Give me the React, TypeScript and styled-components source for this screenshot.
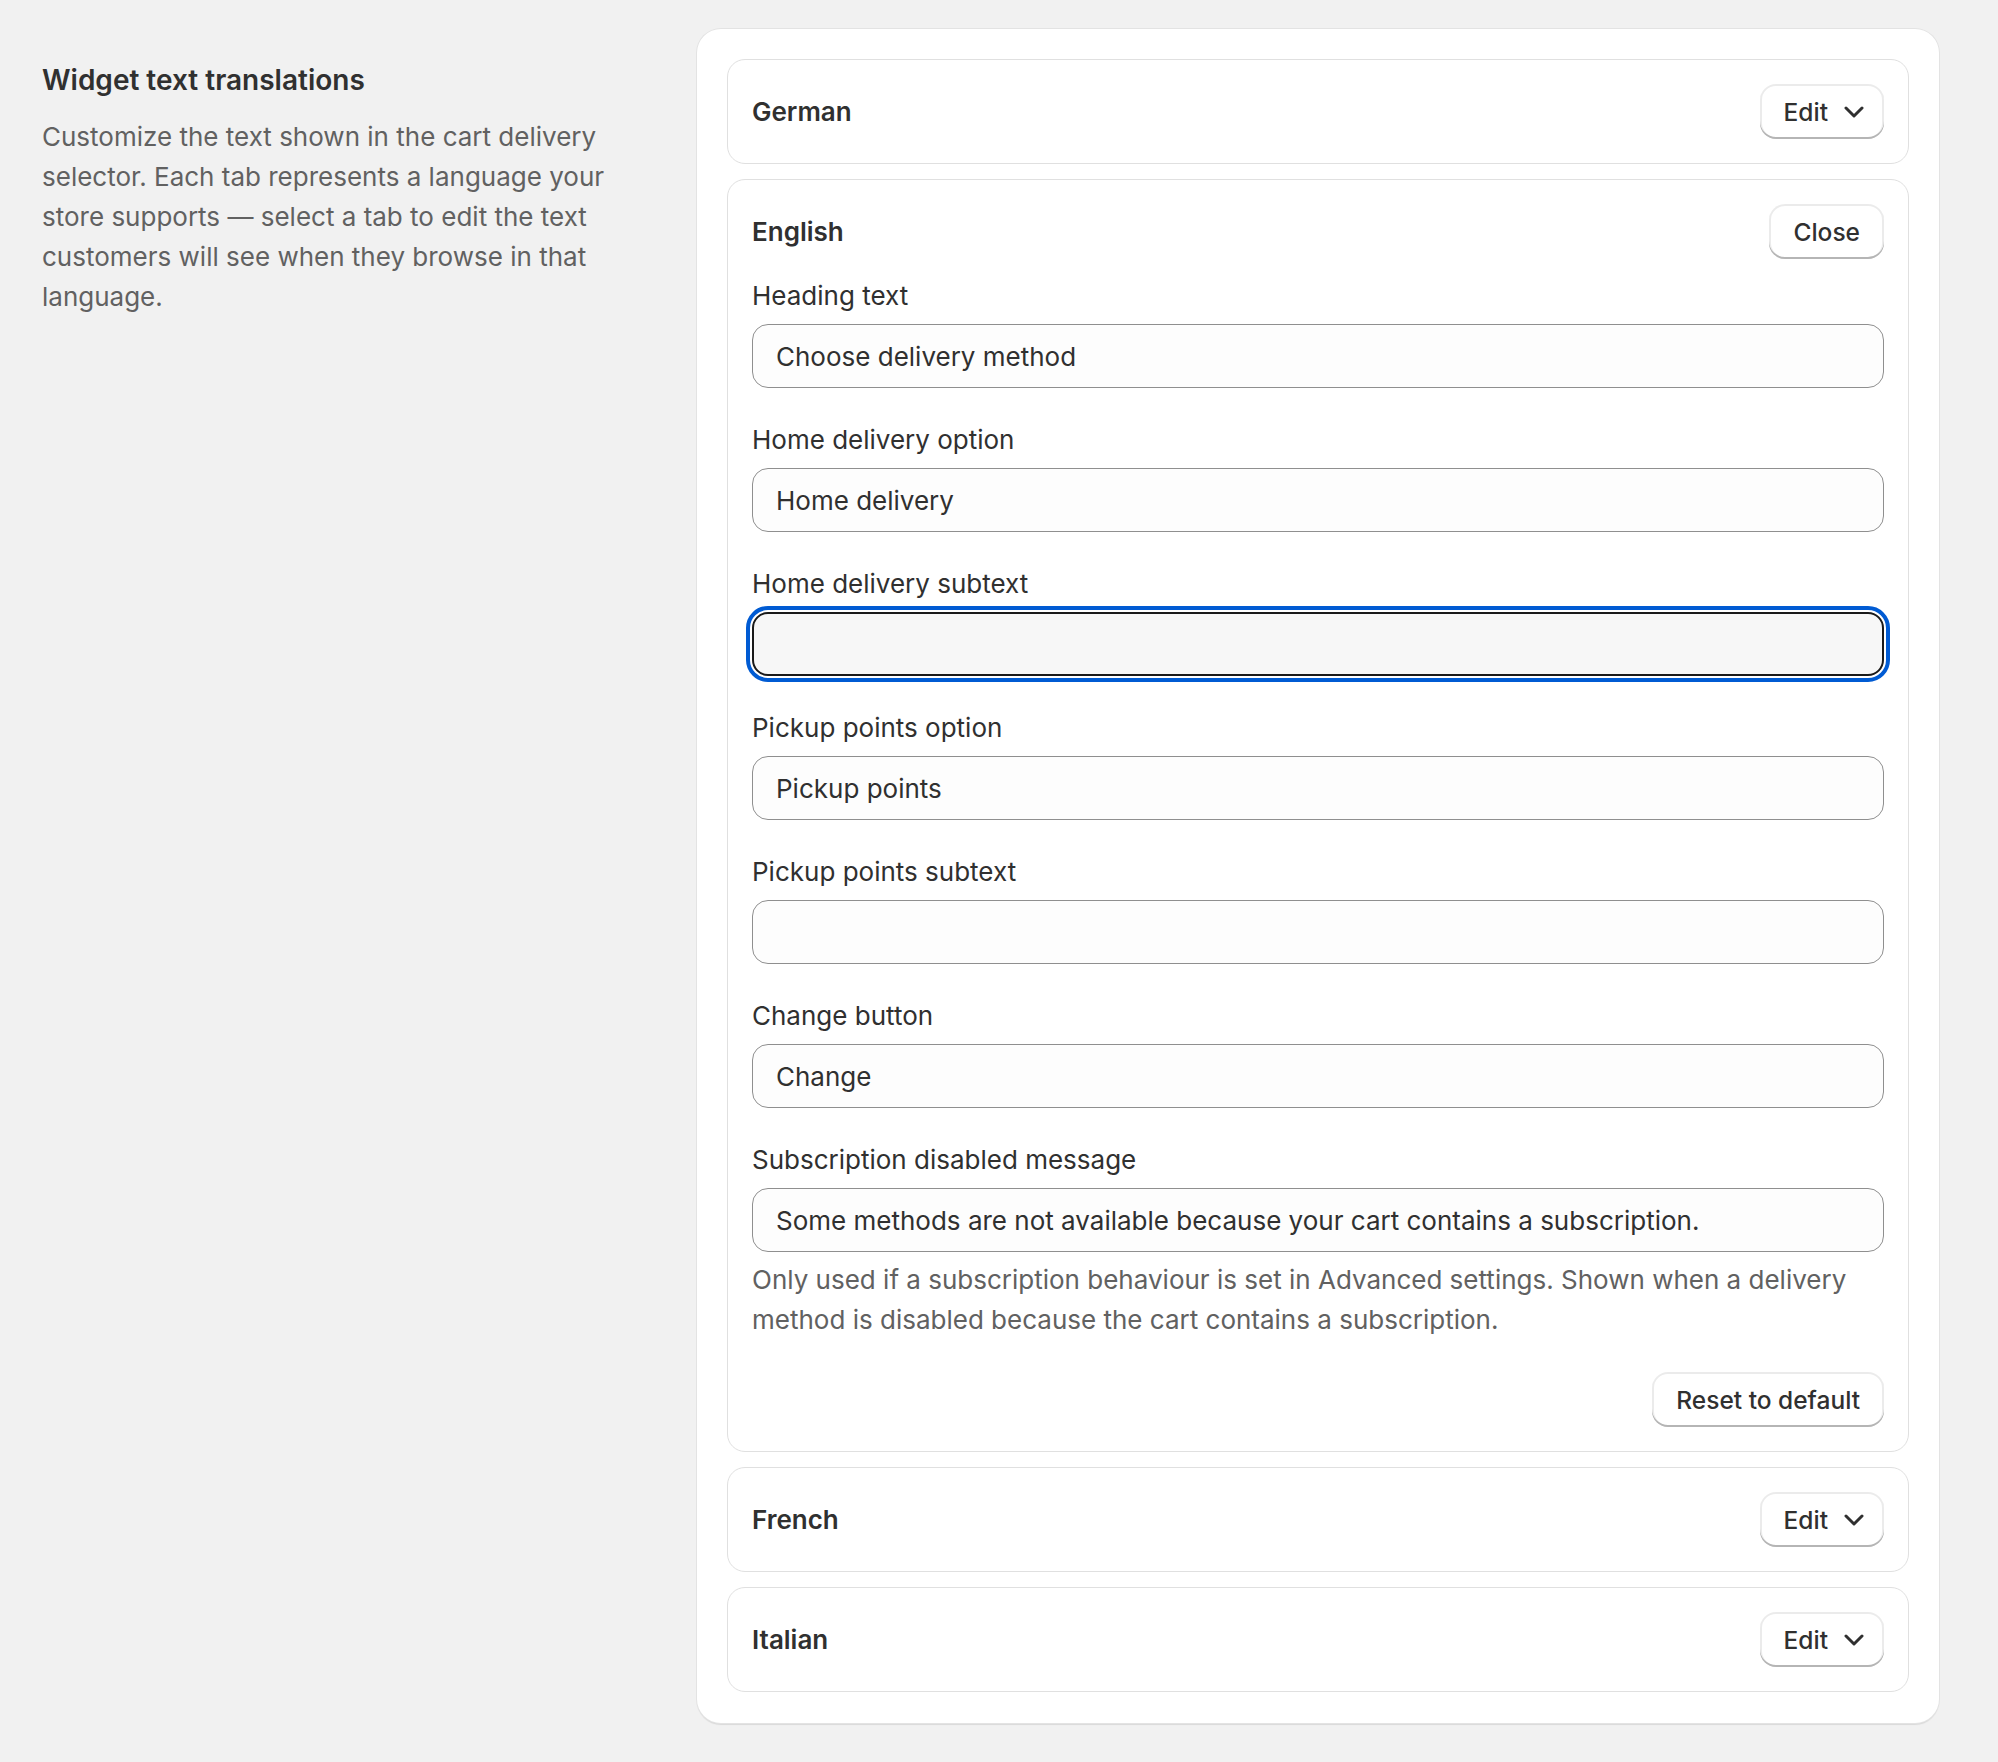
import React, { useState } from 'react';
import styled, { createGlobalStyle } from 'styled-components';

const GlobalStyle = createGlobalStyle`
  html, body {
    margin: 0;
    padding: 0;
    background: #f1f1f1;
  }
  body {
    font-family: Inter, "Noto Sans", "Liberation Sans", sans-serif;
    color: #303030;
    -webkit-font-smoothing: antialiased;
  }
  * { box-sizing: border-box; }
`;

const Page = styled.div`
  display: grid;
  grid-template-columns: 615px 1242px;
  column-gap: 40px;
  align-items: start;
  padding: 29px 59px 40px 42px;
  min-height: 1762px;
`;

const Intro = styled.div`
  padding-top: 31px;
`;

const IntroTitle = styled.h2`
  margin: 0;
  font-size: 28px;
  line-height: 40px;
  font-weight: 600;
  color: #303030;
`;

const IntroText = styled.p`
  margin: 17px 0 0;
  font-size: 26px;
  line-height: 40px;
  color: #616161;
`;

const Card = styled.div`
  background: #fff;
  border-radius: 24px;
  padding: 30px 30px 31px;
  box-shadow: 0 0 0 1px #e3e3e3, 0 2px 1px rgba(0, 0, 0, 0.1);
  display: flex;
  flex-direction: column;
  gap: 15px;
`;

const Section = styled.div`
  border: 1px solid #e0e0e0;
  border-radius: 18px;
  padding: 24px;
`;

const SectionHeader = styled.div<{ $open?: boolean }>`
  display: flex;
  align-items: center;
  justify-content: space-between;
  min-height: 55px;
  margin-bottom: ${(p) => (p.$open ? '17px' : '0')};
`;

const LangName = styled.div`
  font-size: 26px;
  font-weight: 600;
  color: #303030;
`;

const Button = styled.button`
  display: inline-flex;
  align-items: center;
  gap: 16px;
  height: 55px;
  padding: 0 24px;
  border: none;
  border-radius: 16px;
  background: #fff;
  font-family: inherit;
  font-size: 24.5px;
  font-weight: 500;
  color: #303030;
  cursor: pointer;
  box-shadow: inset 0 -2px 0 #b5b5b5, inset 0 0 0 2px rgba(0, 0, 0, 0.08);
  svg { margin-right: -4px; }
`;

const Fields = styled.div`
  display: flex;
  flex-direction: column;
  gap: 32px;
`;

const Field = styled.div`
  display: flex;
  flex-direction: column;
`;

const Label = styled.label`
  font-size: 26px;
  line-height: 40px;
  margin-bottom: 8px;
  color: #303030;
`;

const Input = styled.input<{ $focused?: boolean }>`
  height: 64px;
  width: 100%;
  padding: 0 23px;
  border: 1px solid #8f8f8f;
  border-radius: 16px;
  background: #fdfdfd;
  font-family: inherit;
  font-size: 26px;
  color: #303030;
  outline: none;
  ${(p) =>
    p.$focused &&
    `
    background: #f7f7f7;
    border: 2px solid #1a1a1a;
    outline: 4px solid #005bd3;
    outline-offset: 2px;
  `}
`;

const HelpText = styled.div`
  margin-top: 8px;
  font-size: 26px;
  line-height: 40px;
  color: #616161;
`;

const Footer = styled.div`
  display: flex;
  justify-content: flex-end;
  margin-top: 32px;
`;

function Chevron() {
  return (
    <svg width="20" height="12" viewBox="0 0 20 12" fill="none">
      <path d="M2 2l8 8 8-8" stroke="#303030" strokeWidth="3" strokeLinecap="round" strokeLinejoin="round" />
    </svg>
  );
}

const fields = [
  { label: 'Heading text', value: 'Choose delivery method' },
  { label: 'Home delivery option', value: 'Home delivery' },
  { label: 'Home delivery subtext', value: '', focused: true },
  { label: 'Pickup points option', value: 'Pickup points' },
  { label: 'Pickup points subtext', value: '' },
  { label: 'Change button', value: 'Change' },
  { label: 'Subscription disabled message', value: 'Some methods are not available because your cart contains a subscription.' },
];

const languages = ['German', 'English', 'French', 'Italian'];

export default function App() {
  const [openLang, setOpenLang] = useState('English');

  return (
    <>
      <GlobalStyle />
      <Page>
        <Intro>
          <IntroTitle>Widget text translations</IntroTitle>
          <IntroText>
            Customize the text shown in the cart delivery selector. Each tab represents a language your store
            supports — select a tab to edit the text customers will see when they browse in that language.
          </IntroText>
        </Intro>

        <Card>
          {languages.map((lang) => {
            const open = lang === openLang;
            return (
              <Section key={lang}>
                <SectionHeader $open={open}>
                  <LangName>{lang}</LangName>
                  {open ? (
                    <Button onClick={() => setOpenLang('')}>Close</Button>
                  ) : (
                    <Button onClick={() => setOpenLang(lang)}>
                      Edit
                      <Chevron />
                    </Button>
                  )}
                </SectionHeader>
                {open && (
                  <>
                    <Fields>
                      {fields.map((f) => (
                        <Field key={f.label}>
                          <Label>{f.label}</Label>
                          <Input defaultValue={f.value} $focused={f.focused} />
                        </Field>
                      ))}
                    </Fields>
                    <HelpText>
                      Only used if a subscription behaviour is set in Advanced settings. Shown when a delivery
                      method is disabled because the cart contains a subscription.
                    </HelpText>
                    <Footer>
                      <Button>Reset to default</Button>
                    </Footer>
                  </>
                )}
              </Section>
            );
          })}
        </Card>
      </Page>
    </>
  );
}
